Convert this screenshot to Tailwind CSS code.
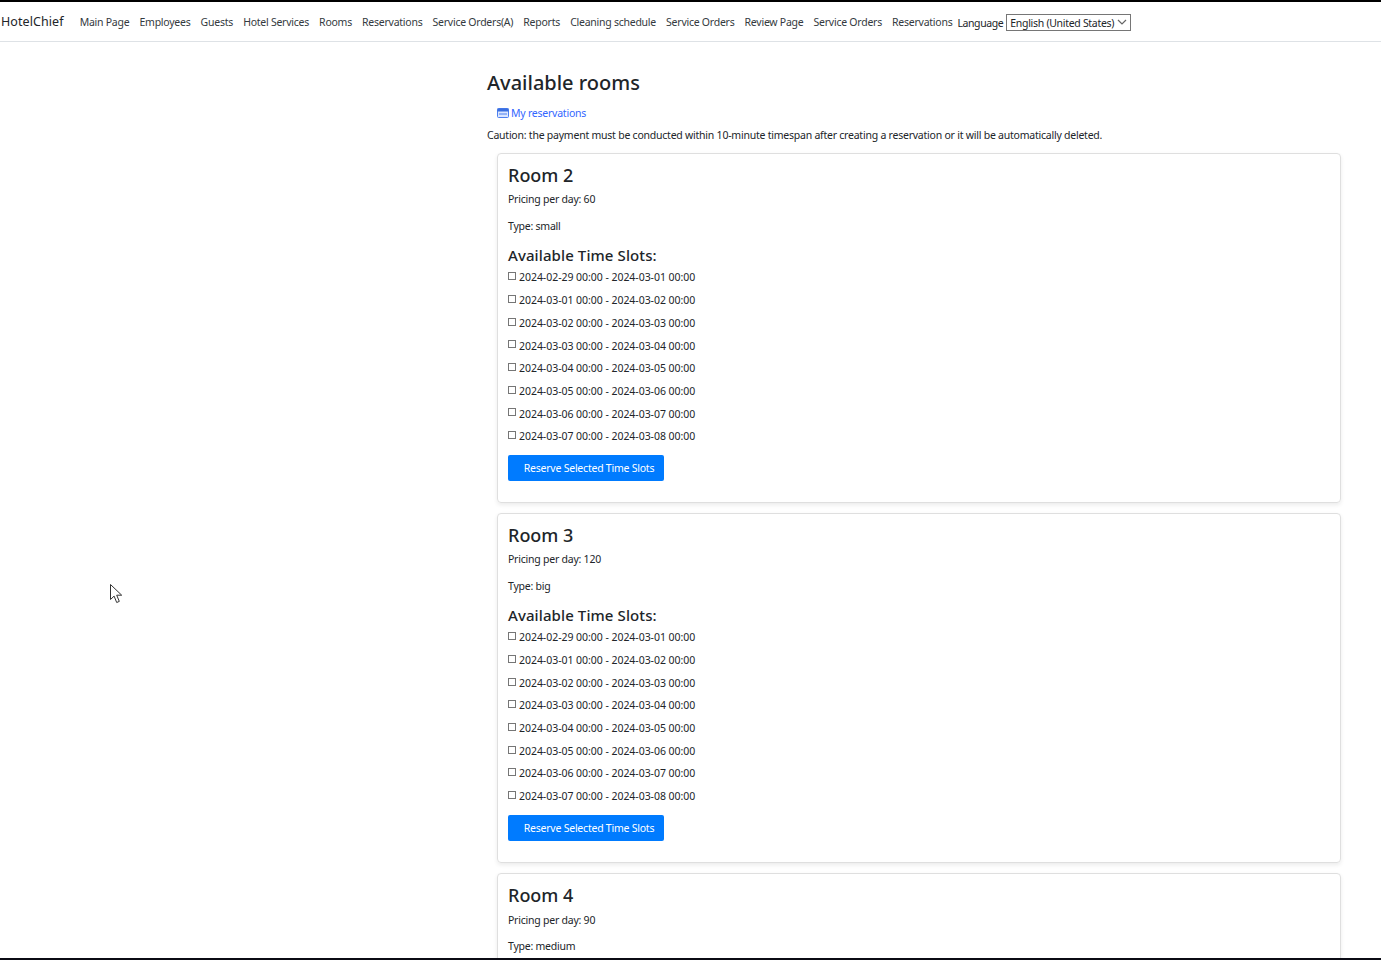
<!DOCTYPE html>
<html>
<head>
<meta charset="UTF-8">
<meta name="viewport" content="width=device-width, initial-scale=1.0">
<script src="https://cdn.jsdelivr.net/npm/@tailwindcss/browser@4"></script>
</head>
<body class="relative h-screen overflow-hidden bg-white text-[#212529] font-['Noto_Sans',sans-serif] text-[10.5px] tracking-[-0.23px]">
  <div class="h-[2px] bg-black"></div>
  <nav class="flex items-center h-[40px] border-b border-[#dee2e6] whitespace-nowrap">
    <a class="ml-[1px] mr-[16px] mt-[2px] text-[12.5px] tracking-[0.08px]">HotelChief</a>
    <div class="flex gap-[10.15px] mt-[3px] tracking-[-0.25px] text-[#343a40]">
      <a>Main Page</a><a>Employees</a><a>Guests</a><a>Hotel Services</a><a>Rooms</a><a>Reservations</a><a>Service Orders(A)</a><a>Reports</a><a>Cleaning schedule</a><a>Service Orders</a><a>Review Page</a><a>Service Orders</a><a>Reservations</a>
    </div>
    <span class="ml-[5px] mt-[5px] tracking-[-0.4px]">Language</span>
    <div class="ml-[3px] mt-[1px] flex items-center justify-between w-[125px] h-[17px] px-[3px] border border-[#767676]">
      <span class="mt-[4px] tracking-[-0.3px]">English (United States)</span>
      <svg width="10" height="6" viewBox="0 0 10 6" fill="none" stroke="#666" stroke-width="1.2"><path d="M1 1l4 4 4-4"/></svg>
    </div>
  </nav>

  <main class="ml-[487px] mr-[40px]">
    <h1 class="mt-[26px] h-[30px] text-[20px] tracking-normal leading-[29px] font-medium">Available rooms</h1>
    <a class="mt-[7px] ml-[10px] flex items-center gap-[2px] h-[16px] text-[#3366ff]">
      <svg width="12" height="10" viewBox="0 0 12 10"><rect x="0.5" y="0.5" width="11" height="9" rx="1" fill="#dbe6ff" stroke="#4d80f0"/><rect x="0.5" y="0.5" width="11" height="3" fill="#3b6fe0"/><path d="M2 6h8" stroke="#4d80f0"/></svg>
      <span class="mt-[2px]">My reservations</span>
    </a>
    <p class="mt-[6px] h-[16px] leading-[16px]">Caution: the payment must be conducted within 10-minute timespan after creating a reservation or it will be automatically deleted.</p>

    <div class="ml-[10px] mt-[10px] flex flex-col gap-[10px]">
      <section class="border border-[#dfdfdf] rounded-[4px] shadow-[0_2px_4px_rgba(0,0,0,0.08)] px-[10px] pt-[10px] pb-[21px]">
        <h2 class="h-[23px] text-[18px] tracking-normal leading-[23px] font-medium">Room 2</h2>
        <p class="mt-[4px] leading-[17px]">Pricing per day: 60</p>
        <p class="mt-[10px] leading-[17px]">Type: small</p>
        <h3 class="mt-[10px] text-[15px] tracking-[0.1px] leading-[21px] font-medium">Available Time Slots:</h3>
        <div class="tracking-[-0.04px]">
          <label class="flex items-center gap-[3px] h-[22.7px] pt-[2px]"><span class="size-[8px] -mt-[4px] border border-[#767676]"></span>2024-02-29 00:00 - 2024-03-01 00:00</label>
          <label class="flex items-center gap-[3px] h-[22.7px] pt-[2px]"><span class="size-[8px] -mt-[4px] border border-[#767676]"></span>2024-03-01 00:00 - 2024-03-02 00:00</label>
          <label class="flex items-center gap-[3px] h-[22.7px] pt-[2px]"><span class="size-[8px] -mt-[4px] border border-[#767676]"></span>2024-03-02 00:00 - 2024-03-03 00:00</label>
          <label class="flex items-center gap-[3px] h-[22.7px] pt-[2px]"><span class="size-[8px] -mt-[4px] border border-[#767676]"></span>2024-03-03 00:00 - 2024-03-04 00:00</label>
          <label class="flex items-center gap-[3px] h-[22.7px] pt-[2px]"><span class="size-[8px] -mt-[4px] border border-[#767676]"></span>2024-03-04 00:00 - 2024-03-05 00:00</label>
          <label class="flex items-center gap-[3px] h-[22.7px] pt-[2px]"><span class="size-[8px] -mt-[4px] border border-[#767676]"></span>2024-03-05 00:00 - 2024-03-06 00:00</label>
          <label class="flex items-center gap-[3px] h-[22.7px] pt-[2px]"><span class="size-[8px] -mt-[4px] border border-[#767676]"></span>2024-03-06 00:00 - 2024-03-07 00:00</label>
          <label class="flex items-center gap-[3px] h-[22.7px] pt-[2px]"><span class="size-[8px] -mt-[4px] border border-[#767676]"></span>2024-03-07 00:00 - 2024-03-08 00:00</label>
        </div>
        <button class="mt-[7.4px] block w-[156px] h-[26px] pl-[6px] pt-[2px] rounded-[2px] bg-[#007bff] text-white">Reserve Selected Time Slots</button>
      </section>

      <section class="border border-[#dfdfdf] rounded-[4px] shadow-[0_2px_4px_rgba(0,0,0,0.08)] px-[10px] pt-[10px] pb-[21px]">
        <h2 class="h-[23px] text-[18px] tracking-normal leading-[23px] font-medium">Room 3</h2>
        <p class="mt-[4px] leading-[17px]">Pricing per day: 120</p>
        <p class="mt-[10px] leading-[17px]">Type: big</p>
        <h3 class="mt-[10px] text-[15px] tracking-[0.1px] leading-[21px] font-medium">Available Time Slots:</h3>
        <div class="tracking-[-0.04px]">
          <label class="flex items-center gap-[3px] h-[22.7px] pt-[2px]"><span class="size-[8px] -mt-[4px] border border-[#767676]"></span>2024-02-29 00:00 - 2024-03-01 00:00</label>
          <label class="flex items-center gap-[3px] h-[22.7px] pt-[2px]"><span class="size-[8px] -mt-[4px] border border-[#767676]"></span>2024-03-01 00:00 - 2024-03-02 00:00</label>
          <label class="flex items-center gap-[3px] h-[22.7px] pt-[2px]"><span class="size-[8px] -mt-[4px] border border-[#767676]"></span>2024-03-02 00:00 - 2024-03-03 00:00</label>
          <label class="flex items-center gap-[3px] h-[22.7px] pt-[2px]"><span class="size-[8px] -mt-[4px] border border-[#767676]"></span>2024-03-03 00:00 - 2024-03-04 00:00</label>
          <label class="flex items-center gap-[3px] h-[22.7px] pt-[2px]"><span class="size-[8px] -mt-[4px] border border-[#767676]"></span>2024-03-04 00:00 - 2024-03-05 00:00</label>
          <label class="flex items-center gap-[3px] h-[22.7px] pt-[2px]"><span class="size-[8px] -mt-[4px] border border-[#767676]"></span>2024-03-05 00:00 - 2024-03-06 00:00</label>
          <label class="flex items-center gap-[3px] h-[22.7px] pt-[2px]"><span class="size-[8px] -mt-[4px] border border-[#767676]"></span>2024-03-06 00:00 - 2024-03-07 00:00</label>
          <label class="flex items-center gap-[3px] h-[22.7px] pt-[2px]"><span class="size-[8px] -mt-[4px] border border-[#767676]"></span>2024-03-07 00:00 - 2024-03-08 00:00</label>
        </div>
        <button class="mt-[7.4px] block w-[156px] h-[26px] pl-[6px] pt-[2px] rounded-[2px] bg-[#007bff] text-white">Reserve Selected Time Slots</button>
      </section>

      <section class="border border-[#dfdfdf] rounded-[4px] shadow-[0_2px_4px_rgba(0,0,0,0.08)] px-[10px] pt-[10px] pb-[21px]">
        <h2 class="h-[23px] text-[18px] tracking-normal leading-[23px] font-medium">Room 4</h2>
        <p class="mt-[5px] leading-[17px]">Pricing per day: 90</p>
        <p class="mt-[9px] leading-[17px]">Type: medium</p>
      </section>
    </div>
  </main>

  <svg class="absolute left-[110px] top-[584px]" width="13" height="20" viewBox="0 0 13 20" fill="#fff" stroke="#333" stroke-width="1"><path d="M0.5 0.5v15l3.6-3.4 2.6 6.4 2.6-1.1-2.6-6.2h5z"/></svg>
  <div class="absolute bottom-0 inset-x-0 h-[2px] bg-[#0b0b14]"></div>
</body>
</html>
